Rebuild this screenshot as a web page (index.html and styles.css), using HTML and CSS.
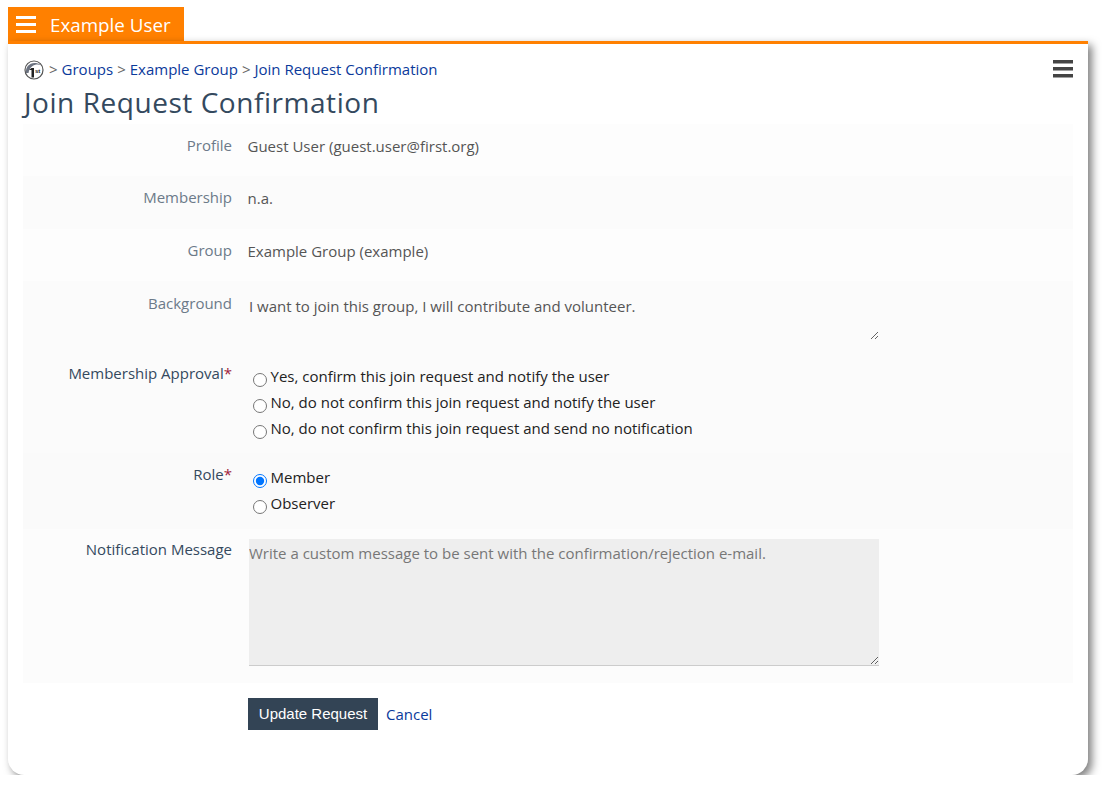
FILE: index.html
```html
<!DOCTYPE html>
<html lang="en">
<head>
<meta charset="utf-8">
<title>Join Request Confirmation</title>
<link rel="stylesheet" href="styles.css">
</head>
<body>
<div class="tab">
  <svg class="tab-icon" width="20" height="18" viewBox="0 0 20 18"><rect y="0" width="20" height="3" fill="#fff"/><rect y="7" width="20" height="3" fill="#fff"/><rect y="14" width="20" height="3" fill="#fff"/></svg>
  <span class="tab-title">Example User</span>
</div>
<main class="card">
  <div class="top">
    <nav class="crumbs">
      <svg class="logo" width="20" height="20" viewBox="0 0 20 20"><circle cx="10" cy="10" r="9" fill="#fff" stroke="#555" stroke-width="1.200"/><path d="M2 13C1 5 9 0 17 5C12 3.500 6 5 4.500 13Z" fill="#6b7280"/><path d="M7.500 8h2.500v9.500h-2.500zM5 10l2.500-2v2z" fill="#222"/><text x="11" y="12.500" class="logo-text">st</text></svg>
      <span class="sep">&gt;</span><a href="#">Groups</a><span class="sep">&gt;</span><a href="#">Example Group</a><span class="sep">&gt;</span><a href="#">Join Request Confirmation</a>
    </nav>
    <svg class="menu" width="20" height="18" viewBox="0 0 20 18"><rect y="0" width="20" height="3.500" fill="#444"/><rect y="7" width="20" height="3.500" fill="#444"/><rect y="14" width="20" height="3.500" fill="#444"/></svg>
  </div>
  <h1>Join Request Confirmation</h1>
  <form class="form">
    <div class="row r1"><div class="label">Profile</div><div class="value">Guest User (guest.user@first.org)</div></div>
    <div class="row r2"><div class="label">Membership</div><div class="value">n.a.</div></div>
    <div class="row r3"><div class="label">Group</div><div class="value">Example Group (example)</div></div>
    <div class="row r4"><div class="label">Background</div><div class="field"><textarea class="ta ta-ro" readonly>I want to join this group, I will contribute and volunteer.</textarea></div></div>
    <div class="row r5"><div class="label strong">Membership Approval<span class="req">*</span></div>
      <div class="radios">
        <label><input type="radio" name="a">Yes, confirm this join request and notify the user</label>
        <label><input type="radio" name="a">No, do not confirm this join request and notify the user</label>
        <label><input type="radio" name="a">No, do not confirm this join request and send no notification</label>
      </div></div>
    <div class="row r6"><div class="label strong">Role<span class="req">*</span></div>
      <div class="radios">
        <label><input type="radio" name="r" checked>Member</label>
        <label><input type="radio" name="r">Observer</label>
      </div></div>
    <div class="row r7"><div class="label strong">Notification Message</div><div class="field"><textarea class="ta ta-msg" placeholder="Write a custom message to be sent with the confirmation/rejection e-mail."></textarea></div></div>
    <div class="actions"><button type="button" class="btn">Update Request</button><a href="#" class="cancel">Cancel</a></div>
  </form>
</main>
</body>
</html>
```
FILE: styles.css
```css
html, body { margin: 0; padding: 0; background: #fff; }
body { padding: 7px 15px 0 8px; font: 15px/20px "Open Sans", sans-serif; color: #444; width: 1080px; }
a { color: #0b3a9b; text-decoration: none; }
.tab { width: 176px; height: 34px; background: #ff8000; display: flex; align-items: center; color: #fff; box-sizing: border-box; padding-left: 8px; }
.tab-icon { display: block; margin: 1px 14px 0 0; }
.tab-title { font-size: 18.800px; line-height: 34px; margin-top: 2px; }
.card { background: #fff; border-top: 3px solid #ff8000; height: 734px; border-radius: 0 0 16px 16px; box-shadow: 4px 4px 8px rgba(0,0,0,.5); padding: 0 15px; box-sizing: border-box; }
.top { display: flex; justify-content: space-between; padding-top: 14px; height: 41px; box-sizing: border-box; }
.crumbs { display: flex; align-items: center; height: 22px; color: #555; }
.logo { display: block; margin: 2px 3px 0 1px; }
.logo-text { font: bold 6px "Liberation Sans", sans-serif; fill: #222; }
.sep { margin: 0 4px 0 2px; color: #666; }
.crumbs a + .sep { margin-left: 4px; }
.menu { display: block; margin-top: 1.500px; }
h1 { margin: 0; padding-left: 1px; font: 400 28px/34px "Open Sans", sans-serif; color: #34495e; letter-spacing: .55px; height: 39px; box-sizing: content-box; }
.row { display: flex; background: #fbfbfb; box-sizing: border-box; }
.label { width: 209px; text-align: right; color: #6c7a89; flex: none; padding-top: 11px; }
.label.strong { color: #34495e; }
.req { color: #a01c3c; }
.value { margin-left: 15.500px; padding-top: 12px; color: #555; }
.r1 { height: 52px; background: #fdfdfd; }
.r2 { height: 53px; background: #fbfbfb; }
.r3 { height: 52px; background: #fdfdfd; }
.r4 { height: 70px; background: #fbfbfb; }
.r4 .label { padding-top: 12px; }
.r5 { height: 102px; background: #fbfbfb; }
.r5 .label { padding-top: 12px; }
.r6 { height: 76px; background: #fafafa; }
.r7 { height: 154px; background: #fcfcfc; }
.r7 .label { padding-top: 10px; }
.field { margin-left: 17px; padding-top: 11px; }
.r7 .field { padding-top: 10px; }
.ta { display: block; width: 630px; box-sizing: border-box; border: 0; margin: 0; padding: 4px 0 0; font: 15px/20px "Open Sans", sans-serif; color: #555; }
.ta-ro { height: 48px; background: transparent; }
.ta-msg { height: 127px; background: #eee; border-bottom: 1px solid #ccc; }
.ta-msg::placeholder { color: #777; opacity: 1; }
.radios { margin-left: 21.500px; padding-top: 12px; display: flex; flex-direction: column; color: #222; }
.r6 .radios { padding-top: 11px; }
.radios label { display: flex; align-items: center; height: 26px; }
.radios input { margin: 7px 3.500px 0 -.5px; width: 14px; height: 14px; }
.actions { display: flex; align-items: center; padding: 15px 0 0 225px; }
.btn { height: 32px; width: 130px; border: 0; padding: 0 0 2px; background: #334455; color: #fff; font: 15px "Liberation Sans", sans-serif; }
.cancel { margin-left: 8px; }
```
